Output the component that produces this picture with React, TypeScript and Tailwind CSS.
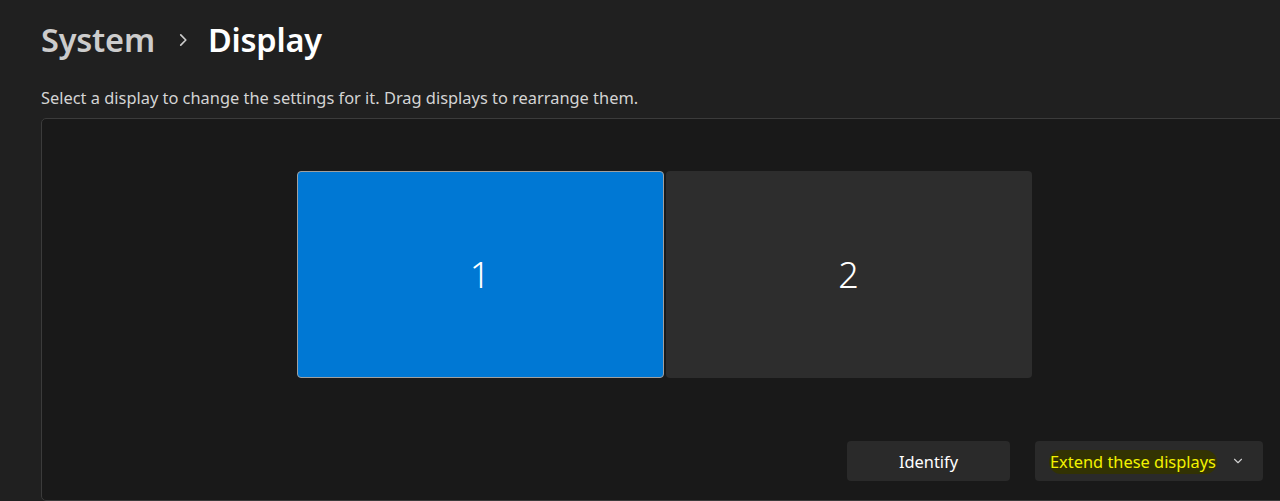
import React from 'react';

function Chevron({ className }: { className?: string }) {
  return (
    <svg viewBox="0 0 16 16" className={className} fill="none" stroke="currentColor" strokeWidth={1.3} strokeLinecap="round" strokeLinejoin="round">
      <path d="M4 6l4 4 4-4" />
    </svg>
  );
}

export default function App() {
  return (
    <div className="h-[501px] w-full overflow-hidden bg-[#202020] pl-[41px] font-['Noto_Sans',sans-serif]">
      {/* Breadcrumb */}
      <div className="flex h-[80px] items-center">
        <span className="text-[32.5px] font-semibold tracking-[-0.2px] text-[#cccccc]">System</span>
        <svg viewBox="0 0 16 16" className="ml-[19px] mr-[16px] h-[18px] w-[18px] text-[#cccccc]" fill="none" stroke="currentColor" strokeWidth={1.5} strokeLinecap="round" strokeLinejoin="round">
          <path d="M6 3.5l4.5 4.5L6 12.5" />
        </svg>
        <span className="text-[32.5px] font-semibold tracking-[-0.2px] text-white">Display</span>
      </div>

      <p className="mt-[6px] text-[16.4px] leading-[24px] text-[#d4d4d4]">
        Select a display to change the settings for it. Drag displays to rearrange them.
      </p>

      {/* Arrangement panel */}
      <div className="mt-[8px] flex h-[383px] w-[1246px] flex-col rounded-[5px] border border-[#3b3b3b] bg-[#191919]">
        <div className="flex justify-center gap-[2px] pt-[52px]">
          <div className="flex h-[207px] w-[367px] items-center justify-center rounded-[4px] border border-[#a0a0a0] bg-[#0078d4]">
            <span className="text-[36px] font-light text-white">1</span>
          </div>
          <div className="flex h-[207px] w-[366px] items-center justify-center rounded-[4px] bg-[#2d2d2d]">
            <span className="text-[36px] font-light text-white">2</span>
          </div>
        </div>

        <div className="mt-[63px] flex justify-end gap-[25px] pr-[23px]">
          <button className="flex h-[40px] w-[163px] items-center justify-center rounded-[4px] bg-[#2a2a2a] pt-[2px] text-[16.4px] text-white">
            Identify
          </button>
          <button className="flex h-[40px] w-[228px] items-center justify-between rounded-[4px] bg-[#2a2a2a] pl-[14px] pr-[18px]">
            <span className="mt-[2px] rounded-[12px] bg-[#323203] px-[1px] text-[16.4px] text-[#f2f200]">Extend these displays</span>
            <Chevron className="h-[14px] w-[14px] text-[#cfcfcf]" />
          </button>
        </div>
      </div>
    </div>
  );
}
